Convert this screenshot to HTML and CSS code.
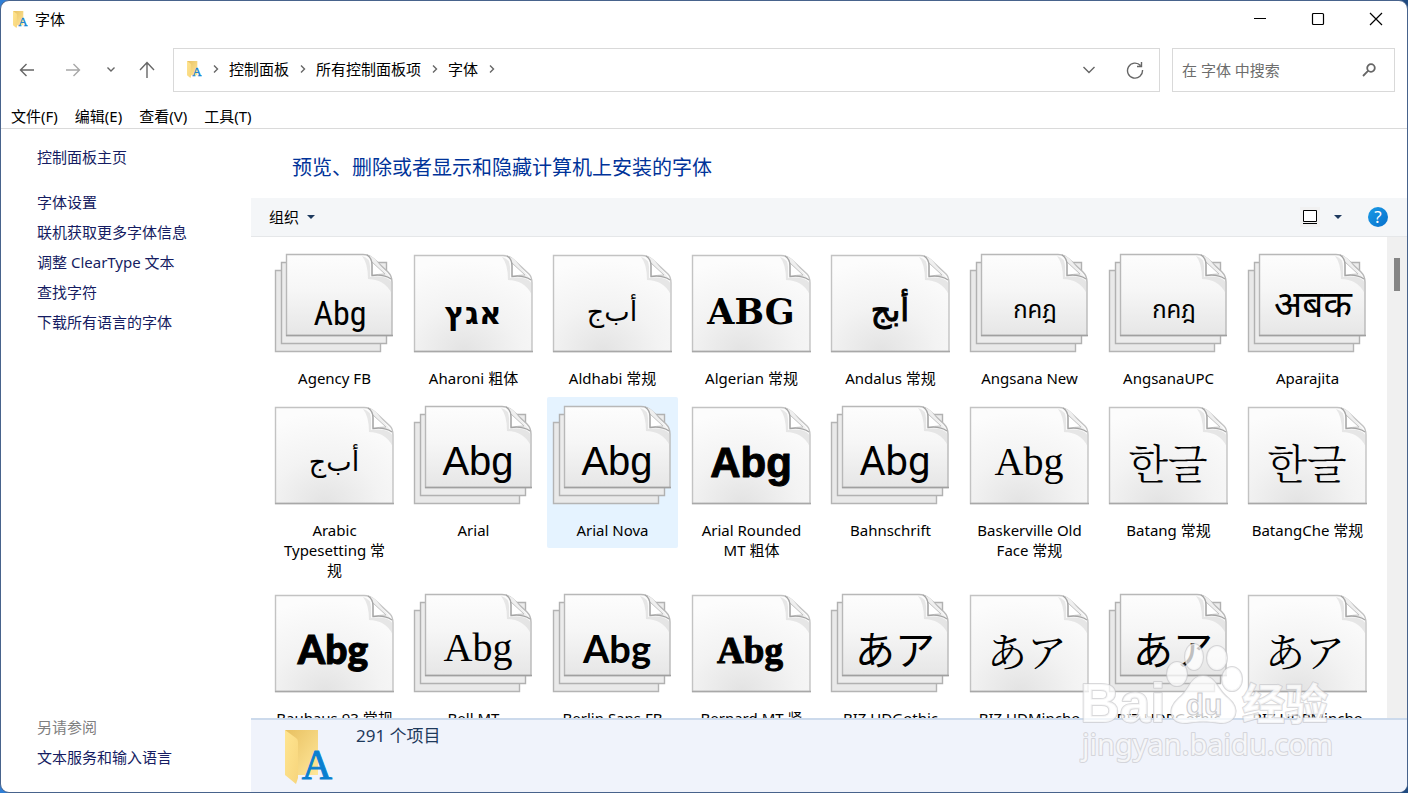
FILE: index.html
```
<!DOCTYPE html>
<html lang="zh-CN">
<head>
<meta charset="utf-8">
<title>字体</title>
<link rel="stylesheet" href="styles.css">
</head>
<body>
<svg class="defs" aria-hidden="true">
  <defs>
    <linearGradient id="paper" x1="0" y1="0" x2="0" y2="1"><stop offset="0" stop-color="#fdfdfd"/><stop offset=".45" stop-color="#f6f6f6"/><stop offset="1" stop-color="#e6e6e6"/></linearGradient>
    <radialGradient id="sheet" cx=".42" cy="1" r=".95"><stop offset="0" stop-color="#e3e3e3"/><stop offset=".5" stop-color="#f3f3f3"/><stop offset="1" stop-color="#fcfcfc"/></radialGradient>
    <linearGradient id="back" x1="0" y1="0" x2="1" y2="1"><stop offset="0" stop-color="#e8c060"/><stop offset="1" stop-color="#ffe79a"/></linearGradient>
    <linearGradient id="flap" x1="0" y1="0" x2="1" y2="1"><stop offset="0" stop-color="#ffe591"/><stop offset="1" stop-color="#f7d57c"/></linearGradient>
    <g id="curl">
      <path d="M-10 1Q-2 3 -2 11V22Q14 20 19.500 27V38Q12 24 -4 24Q-4 8 -10 1" fill="#d2d2d2" opacity=".5"/>
      <path d="M-5 0Q0 3 0 10V20.500Q12 19 19 24L3 4Q0 1 -5 0Z" fill="#efefef"/>
      <path d="M0 7V20.500Q7 19 13 19Z" fill="#fff" stroke="#c2c2c2"/>
      <path d="M-5 0Q0 3 0 10V20.500Q12 19 19 24" fill="none" stroke="#a4a4a4" stroke-width="1.300"/>
    </g>
    <symbol id="single" viewBox="0 0 131 114">
      <path d="M6.500 10.500H95Q101 10.500 106 15L121 29Q124 32 124 38V106.500H6.500Z" fill="url(#sheet)" stroke="#c3c3c3" stroke-width="1.400"/>
      <path d="M6 106.500H125" stroke="#a8a8a8" stroke-width="1.400"/>
      <use href="#curl" x="104" y="11"/>
    </symbol>
    <symbol id="stack" viewBox="0 0 131 114">
      <path d="M6.500 25.500H111.500V106.500H6.500Z" fill="#e9e9e9" stroke="#b4b4b4" stroke-width="1.400"/>
      <path d="M12.500 17.500H117.500V98.500H12.500Z" fill="#ececec" stroke="#b1b1b1" stroke-width="1.400"/>
      <path d="M17.500 9.500H94Q100 9.500 105 14L119 27Q123 31 123 37V90.500H17.500Z" fill="url(#paper)" stroke="#b8b8b8" stroke-width="1.400"/>
      <path d="M17 90.500H124" stroke="#a0a0a0" stroke-width="1.400"/>
      <use href="#curl" x="103" y="10"/>
    </symbol>
    <symbol id="folder" viewBox="0 0 48 54">
      <path d="M0 0H33V45H12Z" fill="url(#back)"/>
      <path d="M0 0L11 8Q13 9 13 12V48L11 54L0 45Z" fill="url(#flap)"/>
      <text x="32" y="49" text-anchor="middle" class="folder-a">A</text>
    </symbol>
  </defs>
</svg>
<div class="window">
  <header class="titlebar">
    <svg class="small-folder"><use href="#folder"/></svg>
    <h1 class="title">字体</h1>
    <div class="caption">
      <button class="icon-button cap" aria-label="最小化"><svg width="14" height="14"><path d="M1 6.500H13" stroke="#000"/></svg></button>
      <button class="icon-button cap" aria-label="最大化"><svg width="14" height="14"><rect x="1.500" y="1.500" width="11" height="11" rx="1" fill="none" stroke="#000" stroke-width="1.200"/></svg></button>
      <button class="icon-button cap" aria-label="关闭"><svg width="14" height="14"><path d="M1 1L13 13M13 1L1 13" stroke="#000" stroke-width="1.200"/></svg></button>
    </div>
  </header>
  <nav class="navbar">
    <div class="history">
      <button class="icon-button back" aria-label="返回"><svg width="16" height="16" class="line"><path d="M15 8H1.500M7.500 2L1.500 8L7.500 14"/></svg></button>
      <button class="icon-button forward" aria-label="前进"><svg width="16" height="16" class="line pale"><path d="M1 8H14.500M8.500 2L14.500 8L8.500 14"/></svg></button>
      <button class="icon-button recent" aria-label="最近的位置"><svg width="10" height="8" class="line"><path d="M1.500 1.500L5 5L8.500 1.500"/></svg></button>
      <button class="icon-button up" aria-label="向上"><svg width="16" height="18" class="line"><path d="M8 17V1.500M1 9L8 1.500L15 9"/></svg></button>
    </div>
    <div class="address">
      <svg class="small-folder"><use href="#folder"/></svg>
      <svg class="chevron line" width="6" height="10"><path d="M1 1.500L4.500 5L1 8.500"/></svg>
      <a href="#cp">控制面板</a>
      <svg class="chevron line" width="6" height="10"><path d="M1 1.500L4.500 5L1 8.500"/></svg>
      <a href="#all">所有控制面板项</a>
      <svg class="chevron line" width="6" height="10"><path d="M1 1.500L4.500 5L1 8.500"/></svg>
      <a href="#fonts">字体</a>
      <svg class="chevron line" width="6" height="10"><path d="M1 1.500L4.500 5L1 8.500"/></svg>
      <div class="address-tools">
        <button class="icon-button" aria-label="以前的位置"><svg width="14" height="10" class="line"><path d="M1.500 2L7 7.500L12.500 2"/></svg></button>
        <button class="icon-button" aria-label="刷新"><svg width="18" height="18" class="line"><path d="M14.500 4.500A7.500 7.500 0 1 0 16.500 9M15.500 1V5.500H11"/></svg></button>
      </div>
    </div>
    <form class="search">
      <input type="search" aria-label="在 字体 中搜索" placeholder="在 字体 中搜索">
      <button type="button" class="icon-button" aria-label="搜索"><svg width="14" height="14" class="line"><circle cx="9" cy="5" r="3.800" stroke-width="1.800"/><path d="M6.300 7.700L1 13" stroke-width="1.800"/></svg></button>
    </form>
  </nav>
  <div class="menubar">
    <button class="menu">文件(F)</button><button class="menu">编辑(E)</button><button class="menu">查看(V)</button><button class="menu">工具(T)</button>
  </div>
  <div class="body">
    <aside class="sidebar">
      <a href="#home" class="home">控制面板主页</a>
      <a href="#settings">字体设置</a>
      <a href="#online">联机获取更多字体信息</a>
      <a href="#cleartype">调整 ClearType 文本</a>
      <a href="#find">查找字符</a>
      <a href="#download">下载所有语言的字体</a>
      <span class="also">另请参阅</span>
      <a href="#text">文本服务和输入语言</a>
    </aside>
    <main class="content">
      <h2 class="heading">预览、删除或者显示和隐藏计算机上安装的字体</h2>
      <div class="toolbar">
        <button class="organize">组织 <svg width="8" height="4"><path d="M0 0H8L4 4Z" fill="#1e3a5f"/></svg></button>
        <div class="view-tools">
          <button class="icon-button view" aria-label="视图"><svg width="14" height="14"><path d="M.5.5H13.500V11.500H.5Z" fill="#fff" stroke="#000"/><path d="M0 13.500H14" stroke="#000"/></svg></button>
          <button class="icon-button" aria-label="更多视图"><svg width="8" height="4"><path d="M0 0H8L4 4Z" fill="#1e3a5f"/></svg></button>
          <button class="help" aria-label="帮助">?</button>
        </div>
      </div>
      <div class="viewport">
        <ul class="grid">
          <li><button class="item"><svg class="icon"><use href="#stack"/><text x="71" y="80" class="g narrow">Abg</text></svg><span>Agency FB</span></button></li>
          <li><button class="item"><svg class="icon"><use href="#single"/><text x="65" y="79" class="g hebrew">אגץ</text></svg><span>Aharoni 粗体</span></button></li>
          <li><button class="item"><svg class="icon"><use href="#single"/><text x="65" y="76" class="g arabic">أب&zwnj;ج</text></svg><span>Aldhabi 常规</span></button></li>
          <li><button class="item"><svg class="icon"><use href="#single"/><text x="65" y="79" class="g algerian">ABG</text></svg><span>Algerian 常规</span></button></li>
          <li><button class="item"><svg class="icon"><use href="#single"/><text x="65" y="76" class="g arabic heavy">أبج</text></svg><span>Andalus 常规</span></button></li>
          <li><button class="item"><svg class="icon"><use href="#stack"/><text x="71" y="73" class="g thai">กคฎ</text></svg><span>Angsana New</span></button></li>
          <li><button class="item"><svg class="icon"><use href="#stack"/><text x="71" y="73" class="g thai">กคฎ</text></svg><span>AngsanaUPC</span></button></li>
          <li><button class="item"><svg class="icon"><use href="#stack"/><text x="71" y="72" class="g deva">अबक</text></svg><span>Aparajita</span></button></li>
          <li><button class="item"><svg class="icon"><use href="#single"/><text x="65" y="74" class="g arabic">أب&zwnj;ج</text></svg><span>Arabic Typesetting 常规</span></button></li>
          <li><button class="item"><svg class="icon"><use href="#stack"/><text x="70" y="78" class="g">Abg</text></svg><span>Arial</span></button></li>
          <li><button class="item selected"><svg class="icon"><use href="#stack"/><text x="70" y="78" class="g">Abg</text></svg><span>Arial Nova</span></button></li>
          <li><button class="item"><svg class="icon"><use href="#single"/><text x="65" y="80" class="g rounded">Abg</text></svg><span>Arial Rounded MT 粗体</span></button></li>
          <li><button class="item"><svg class="icon"><use href="#stack"/><text x="70" y="78" class="g bahn">Abg</text></svg><span>Bahnschrift</span></button></li>
          <li><button class="item"><svg class="icon"><use href="#single"/><text x="65" y="78" class="g serif">Abg</text></svg><span>Baskerville Old Face 常规</span></button></li>
          <li><button class="item"><svg class="icon"><use href="#single"/><text x="65" y="82" class="g korean">한글</text></svg><span>Batang 常规</span></button></li>
          <li><button class="item"><svg class="icon"><use href="#single"/><text x="65" y="82" class="g korean">한글</text></svg><span>BatangChe 常规</span></button></li>
          <li><button class="item"><svg class="icon"><use href="#single"/><text x="64" y="79" class="g bauhaus">Abg</text></svg><span class="one-line">Bauhaus 93 常规</span></button></li>
          <li><button class="item"><svg class="icon"><use href="#stack"/><text x="70" y="76" class="g serif">Abg</text></svg><span>Bell MT</span></button></li>
          <li><button class="item"><svg class="icon"><use href="#stack"/><text x="70" y="78" class="g berlin">Abg</text></svg><span>Berlin Sans FB</span></button></li>
          <li><button class="item"><svg class="icon"><use href="#single"/><text x="64" y="78" class="g bernard">Abg</text></svg><span>Bernard MT 紧缩</span></button></li>
          <li><button class="item"><svg class="icon"><use href="#stack"/><text x="70" y="80" class="g kana">あア</text></svg><span>BIZ UDGothic</span></button></li>
          <li><button class="item"><svg class="icon"><use href="#single"/><text x="63" y="82" class="g mincho">あア</text></svg><span>BIZ UDMincho</span></button></li>
          <li><button class="item"><svg class="icon"><use href="#stack"/><text x="70" y="80" class="g kana">あア</text></svg><span>BIZ UDPGothic</span></button></li>
          <li><button class="item"><svg class="icon"><use href="#single"/><text x="63" y="82" class="g mincho">あア</text></svg><span>BIZ UDPMincho</span></button></li>
        </ul>
        <div class="scrollbar"><div class="thumb"></div></div>
      </div>
      <footer class="status">
        <svg class="large-folder"><use href="#folder"/></svg>
        <span>291 个项目</span>
      </footer>
    </main>
  </div>
  <svg class="watermark" viewBox="0 0 260 130" aria-hidden="true">
    <g class="mark">
      <text x="1" y="74" class="mark-bai">Bai</text>
      <ellipse cx="98" cy="26" rx="10" ry="12"/><ellipse cx="115" cy="9" rx="9" ry="13"/><ellipse cx="138" cy="10" rx="10" ry="12"/><ellipse cx="153" cy="31" rx="10" ry="12"/>
      <path d="M124 28C137 28 138 42 149 50C163 62 156 76 141 75C127 73 121 73 108 75C91 76 87 62 100 50C111 42 111 28 124 28Z"/>
      <text x="163" y="72" class="mark-cn">经验</text>
      <text x="3" y="107" class="mark-url">jingyan.baidu.com</text>
    </g>
    <text x="125" y="67" text-anchor="middle" class="mark-du">du</text>
  </svg>
</div>
</body>
</html>
```
FILE: styles.css
```
* { box-sizing: border-box; }
body {
  margin: 0;
  height: 100vh;
  background: linear-gradient(90deg, #2f7fd6, #4b4f5c 40%, #4b6a99 70%, #1f4a80);
  font: 15px/20px "Noto Sans", "Noto Sans CJK SC", sans-serif;
  color: #000;
}
button { border: 0; padding: 0; background: none; font: inherit; color: inherit; }
a { color: inherit; text-decoration: none; }
.defs { position: absolute; width: 0; height: 0; }
.folder-a { font: 42px "Liberation Serif", serif; fill: #0a7fd0; stroke: #0a7fd0; stroke-width: 1; }
.window {
  position: relative;
  display: flex;
  flex-direction: column;
  height: 100vh;
  border: 1px solid #48638c;
  border-radius: 9px;
  background: #fff;
  overflow: hidden;
}
.icon-button { display: inline-flex; align-items: center; justify-content: center; }
.line { fill: none; stroke: #666; stroke-width: 1.4; }
.pale { stroke: #a8a8a8; }
.small-folder { width: 15px; height: 17px; flex: none; }
.titlebar { display: flex; align-items: center; height: 36px; padding: 0 2px 0 12px; }
.title { margin: 0 0 0 7px; font-size: 15px; font-weight: 400; }
.caption { display: flex; margin-left: auto; }
.cap { width: 58px; height: 36px; }
.navbar { display: flex; padding: 11px 12px 0 0; }
.history { display: flex; align-items: center; width: 172px; flex: none; padding-left: 18px; }
.back { margin-right: 30px; }
.forward { margin-right: 25px; }
.recent { margin-right: 23px; }
.address { display: flex; flex: 1; align-items: center; height: 44px; border: 1px solid #d9d9d9; padding: 0 15px 2px 13px; }
.chevron { margin: 0 10px 0 11px; }
.address-tools { display: flex; gap: 30px; margin-left: auto; padding-top: 2px; }
.search { display: flex; align-items: center; width: 223px; margin-left: 12px; border: 1px solid #d9d9d9; padding: 0 18px 0 9px; }
.search input { flex: 1; min-width: 0; border: 0; padding: 0; outline: 0; background: none; font: inherit; }
.search input::placeholder { color: #6d6d6d; opacity: 1; }
.menubar { display: flex; gap: 17px; height: 37px; padding: 14px 10px 0; border-bottom: 1px solid #dadada; }
.menu { height: 20px; white-space: nowrap; }
.body { display: flex; flex: 1; min-height: 0; }
.sidebar { display: flex; flex-direction: column; gap: 10px; width: 250px; flex: none; padding: 18px 10px 25px 36px; color: #151c62; }
.home { margin-bottom: 15px; }
.also { margin-top: auto; color: #808080; }
.content { display: flex; flex: 1; flex-direction: column; min-width: 0; }
.heading { margin: 0; padding: 24px 41px 16px; font-size: 20px; line-height: 29px; font-weight: 400; color: #003399; }
.toolbar { display: flex; align-items: center; justify-content: space-between; height: 39px; padding: 0 19px 0 18px; border-bottom: 1px solid #e5e7e9; background: #f4f6f8; }
.organize { display: flex; align-items: center; gap: 8px; }
.view-tools { display: flex; align-items: center; }
.view { width: 20px; height: 20px; margin-right: 14px; background: #f1f1f1; }
.help { width: 20px; height: 20px; margin-left: 26px; border-radius: 50%; background: linear-gradient(135deg, #1a9be6, #0870cc); color: #fff; font-size: 17px; line-height: 20px; }
.viewport { display: flex; flex: 1; min-height: 0; overflow: hidden; }
.grid {
  display: grid;
  flex: 1;
  grid-template-columns: repeat(auto-fill, 131px);
  gap: 1px 8px;
  align-content: start;
  margin: 0;
  padding: 8px 0 0 18px;
  list-style: none;
}
.item { display: flex; flex-direction: column; align-items: center; width: 131px; min-height: 151px; padding-bottom: 4px; border-radius: 2px; }
.item span { width: 116px; margin-top: 9px; text-align: center; }
.item .one-line { width: auto; white-space: nowrap; }
.selected { background: #e5f3ff; }
.icon { width: 131px; height: 114px; }
.g { font: 40px "Liberation Sans", sans-serif; text-anchor: middle; fill: #000; }
.narrow { font-family: "Liberation Sans Narrow", "Roboto Condensed", Roboto, sans-serif; font-size: 34px; }
.hebrew { font: bold 31px "DejaVu Sans", sans-serif; }
.arabic { font: 27px "DejaVu Sans", sans-serif; }
.heavy { font-size: 32px; stroke: #000; stroke-width: 1; }
.algerian { font: bold 35px "DejaVu Serif", serif; }
.thai { font-size: 24px; font-family: "Noto Sans Thai", "DejaVu Sans", sans-serif; }
.deva { font-size: 37px; font-family: "Noto Sans Devanagari", "DejaVu Sans", sans-serif; }
.rounded { font-size: 42px; font-weight: 700; stroke: #000; stroke-width: 1; stroke-linejoin: round; }
.bahn { font-family: Roboto, sans-serif; }
.serif { font-family: "Liberation Serif", serif; }
.korean { font: 41px "Noto Serif CJK KR", "Noto Sans CJK KR", sans-serif; font-weight: 300; }
.bauhaus { font: 900 39px Lato, sans-serif; stroke: #000; stroke-width: 1; }
.berlin { font: bold 38px Lato, sans-serif; }
.bernard { font: bold 37px "Liberation Serif", serif; stroke: #000; stroke-width: 1; }
.kana { font: 40px "Noto Sans CJK JP", sans-serif; }
.mincho { font: 40px "Noto Serif CJK JP", "Noto Sans CJK JP", serif; }
.scrollbar { width: 20px; flex: none; padding: 21px 7px 0; background: #f0f0f0; }
.thumb { height: 33px; background: #858585; }
.status { display: flex; gap: 23px; height: 74px; flex: none; padding: 6px 34px; border-top: 2px solid #ccdaec; background: #f0f3fb; color: #1e395b; font-size: 17px; }
.large-folder { width: 48px; height: 54px; margin-top: 4px; }
.watermark { position: absolute; right: 68px; bottom: 14px; width: 260px; height: 130px; overflow: visible; }
.mark { fill: #fff; fill-opacity: .75; stroke: #c4c4c8; stroke-opacity: .65; stroke-width: 2; stroke-linejoin: round; paint-order: stroke; }
.mark-bai { font: bold 55px "Liberation Sans", sans-serif; }
.mark-cn { font: bold 43px "Noto Sans CJK SC", sans-serif; }
.mark-url { font: 29px "Noto Sans", sans-serif; }
.mark-du { font: bold 30px "Liberation Sans", sans-serif; fill: #f8f8fa; stroke: #c9c9cc; stroke-width: 1; }
```
